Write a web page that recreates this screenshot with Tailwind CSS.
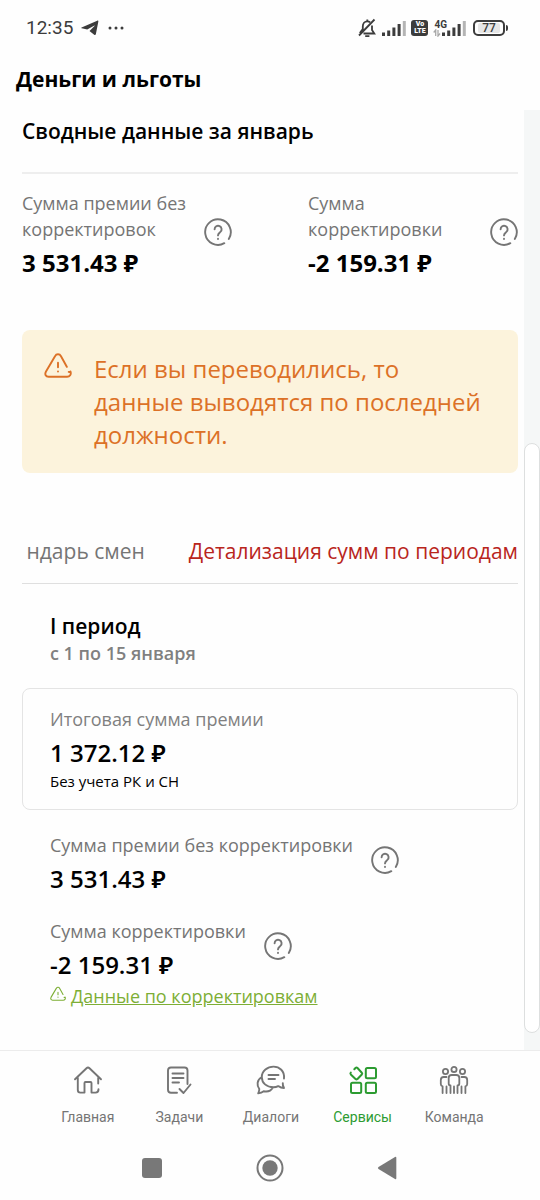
<!DOCTYPE html>
<html lang="ru">
<head>
<meta charset="utf-8">
<meta name="viewport" content="width=device-width, initial-scale=1">
<title>Деньги и льготы</title>
<script src="https://cdn.jsdelivr.net/npm/@tailwindcss/browser@4"></script>
</head>
<body class="flex min-h-screen flex-col bg-[#fefefe] font-['Open_Sans','Noto_Sans',sans-serif] text-black">
<svg class="hidden" aria-hidden="true">
  <symbol id="help" viewBox="0 0 28 28" fill="none" stroke="currentColor" stroke-width="1.900" stroke-linecap="round">
    <path d="M20.300 25.200A12.800 12.800 0 1 1 24.800 20.900"/>
    <path d="M10.600 11.200a3.500 3.500 0 1 1 5.800 2.700c-1.400 1.200-2.400 1.700-2.400 3.500"/>
    <path d="M14 20.800v.2"/>
  </symbol>
  <symbol id="warn" viewBox="0 0 28 28" fill="none" stroke="currentColor" stroke-width="1.900" stroke-linecap="round" stroke-linejoin="round">
    <path d="M22.800 14.800 17 4.200c-1.400-2.600-4.600-2.600-6 0L2 19.500c-1.600 3-.2 5.300 2.600 5.300h18.500c2.700 0 4.400-2.200 3.400-5.300q-.8.600-1.800.4"/>
    <path d="M14 10.800v4.500M14 19.400v.2"/>
  </symbol>
  <symbol id="signal" viewBox="0 0 24 16">
    <path fill="#3c3c3c" d="M0 12.500h3V16H0zM5.200 10.500h3V16h-3zM10.400 7.500h3V16h-3zM15.600 4h3v12h-3z"/>
    <path fill="#b4b4b4" d="M20.800 1h3v15h-3z"/>
  </symbol>
</svg>

<header>
  <div class="flex h-14 items-center justify-between pl-[26px] pr-8 font-[Roboto,sans-serif] text-[#3c3c3c]">
    <div class="flex items-center">
      <span class="text-[19px]">12:35</span>
      <svg class="ml-2 h-4 w-[18px]" viewBox="0 0 18 16" fill="currentColor"><path d="M.6 7.400 16.200.7c.8-.3 1.300.2 1.100 1.100L14.900 14c-.2 1-.9 1.200-1.700.7L8.500 11.100l5-5.100c.3-.4-.1-.5-.5-.3L6.200 9.600.8 8.300c-.7-.2-.7-.6-.2-.9z"/></svg>
      <svg class="ml-2 h-1 w-[18px]" viewBox="0 0 18 4" fill="currentColor"><circle cx="3" cy="2" r="1.500"/><circle cx="9" cy="2" r="1.500"/><circle cx="15" cy="2" r="1.500"/></svg>
    </div>
    <div class="flex items-center">
      <svg class="h-5 w-[18px]" viewBox="0 0 18 20" fill="none" stroke="currentColor" stroke-width="1.800"><path d="M4.800 12V8.500c0-3 1.700-5.200 4.500-5.200 1 0 2 .3 2.800.9M14 7.500V12l2.300 3.500H5.500M1 17.500 16.500 1.500M4.800 11l-3 4"/><path d="M7.200 18.200h4.200M9.300 3.300V1.500"/></svg>
      <svg class="ml-1.5 h-4 w-6"><use href="#signal"/></svg>
      <span class="ml-[5px] flex h-4 w-[17px] flex-col items-center justify-center rounded-[3px] bg-[#3c3c3c] text-[7px] font-black leading-[7px] text-white"><span>Vo</span><span>LTE</span></span>
      <div class="ml-[5px] flex flex-col">
        <span class="pl-px text-[10px] font-bold leading-[9px]">4G</span>
        <svg class="h-2 w-2" viewBox="0 0 8 8" fill="none" stroke="#a8a8a8" stroke-width="1.300"><path d="M2.700 7V1L.7 3.500M5 1v6l2-2.500"/></svg>
      </div>
      <svg class="-ml-[5px] h-4 w-6"><use href="#signal"/></svg>
      <span class="ml-[7px] flex h-4 w-8 items-center justify-center rounded-[5px] border-2 border-current"><span class="rounded-xs bg-[#e6e6e6] px-1 text-[12px] font-medium leading-[10px]">77</span></span>
      <span class="ml-px h-[6px] w-[2px] rounded-r bg-current"></span>
    </div>
  </div>
  <h1 class="px-4 pt-1.5 pb-3.5 text-[21px] font-bold leading-[34px]">Деньги и льготы</h1>
</header>

<div class="flex grow">
  <main class="min-w-0 grow pl-[22px] pr-[6px]">
    <section>
      <h2 class="border-b-2 border-[#eeeeee] pb-5 text-[21px] font-semibold leading-[42px]">Сводные данные за январь</h2>
      <div class="flex justify-between pt-4">
        <div>
          <div class="flex items-end gap-[18px]">
            <p class="text-[18px] leading-[26px] text-[#757575]">Сумма премии без<br>корректировок</p>
            <button type="button" aria-label="Справка о сумме премии" class="-mb-1 text-[#757575]"><svg class="h-7 w-7"><use href="#help"/></svg></button>
          </div>
          <p class="pt-1 text-[24px] font-bold leading-[34px]">3 531.43 ₽</p>
        </div>
        <div class="w-[210px]">
          <div class="flex items-end justify-between">
            <p class="text-[18px] leading-[26px] text-[#757575]">Сумма<br>корректировки</p>
            <button type="button" aria-label="Справка о сумме корректировки" class="-mb-1 text-[#757575]"><svg class="h-7 w-7"><use href="#help"/></svg></button>
          </div>
          <p class="pt-1 text-[24px] font-bold leading-[34px]">-2 159.31 ₽</p>
        </div>
      </div>
    </section>

    <div role="note" class="mt-[50px] flex gap-[22px] rounded-lg bg-[#fcf3dc] py-[22px] pl-[22px] pr-[30px] text-[#dc7127]">
      <svg class="h-7 w-7 shrink-0"><use href="#warn"/></svg>
      <p class="text-[24px] leading-[33px]">Если вы переводились, то данные выводятся по последней должности.</p>
    </div>

    <div role="tablist" class="mt-[62px] flex justify-end overflow-hidden whitespace-nowrap border-b border-[#dfdfdf] pb-4 text-[21px] leading-[32px]">
      <button type="button" role="tab" aria-selected="false" class="mr-11 text-[#757575]">ндарь смен</button>
      <button type="button" role="tab" aria-selected="true" class="text-[#b9251c]">Детализация сумм по периодам</button>
    </div>

    <section>
      <div class="px-7 pt-7">
        <h3 class="text-[21px] font-semibold leading-[28px]">I период</h3>
        <p class="text-[18px] font-semibold leading-[26px] text-[#808080]">с 1 по 15 января</p>
      </div>
      <div class="mt-[22px] rounded-lg border border-[#e4e4e4] px-[27px] py-[17px]">
        <p class="text-[18px] leading-[26px] text-[#808080]">Итоговая сумма премии</p>
        <p class="pt-1 text-[24px] font-semibold leading-[34px]">1 372.12 ₽</p>
        <p class="text-[15px] leading-[22px]">Без учета РК и СН</p>
      </div>
      <div class="flex gap-[18px] px-7 pt-[22px]">
        <div>
          <p class="text-[18px] leading-[26px] text-[#757575]">Сумма премии без корректировки</p>
          <p class="pt-1 text-[24px] font-semibold leading-[34px]">3 531.43 ₽</p>
        </div>
        <button type="button" aria-label="Справка о премии за период" class="mt-[14px] h-7 text-[#757575]"><svg class="h-7 w-7"><use href="#help"/></svg></button>
      </div>
      <div class="flex gap-[18px] px-7 pt-[22px]">
        <div>
          <p class="text-[18px] leading-[26px] text-[#757575]">Сумма корректировки</p>
          <p class="pt-1 text-[24px] font-semibold leading-[34px]">-2 159.31 ₽</p>
        </div>
        <button type="button" aria-label="Справка о корректировке за период" class="mt-[14px] h-7 text-[#757575]"><svg class="h-7 w-7"><use href="#help"/></svg></button>
      </div>
      <a href="#" class="flex items-start gap-[5px] px-7 text-[18px] leading-[28px] text-[#7dae35]">
        <svg class="mt-1 h-4 w-4"><use href="#warn"/></svg><span class="underline">Данные по корректировкам</span>
      </a>
    </section>
  </main>

  <div class="flex w-4 shrink-0 flex-col bg-[#f5f7f7]">
    <div class="grow-[334]"></div>
    <div class="grow-[589] rounded-full border border-[#dddfdf] bg-white"></div>
    <div class="grow-[17]"></div>
  </div>
</div>

<footer class="shrink-0 border-t border-[#ececec] font-[Roboto,sans-serif] text-[#757575]">
  <nav class="flex h-[84px] pl-[42px] pr-10 text-[14px]">
    <a href="#" class="flex flex-1 flex-col items-center pt-[14px]">
      <svg class="h-[30px] w-[30px]" viewBox="0 0 30 30" fill="none" stroke="currentColor" stroke-width="1.900" stroke-linecap="round" stroke-linejoin="round"><path d="M2 14.300 13.500 3.200q1.500-1.400 3 0L28 14.300M4.800 12.500V25q0 2.600 2.600 2.600h4.100V18q0-1 1-1h5q1 0 1 1v9.600h4q3 0 3-3.400M25.200 18.500v-6"/></svg>
      <span class="mt-3 leading-5">Главная</span>
    </a>
    <a href="#" class="flex flex-1 flex-col items-center pt-[14px]">
      <svg class="h-[30px] w-[30px]" viewBox="0 0 30 30" fill="none" stroke="currentColor" stroke-width="1.900" stroke-linecap="round" stroke-linejoin="round"><path d="M13 27.800H7q-3 0-3-3V5.500q0-3 3-3h13.500q3 0 3 3V19M8.500 8.500h11M8.500 13h11M8.500 17.500H15M15.500 24l4 4 7-8.500"/></svg>
      <span class="mt-3 leading-5">Задачи</span>
    </a>
    <a href="#" class="flex flex-1 flex-col items-center pt-[14px]">
      <svg class="h-[30px] w-[30px]" viewBox="0 0 30 30" fill="none" stroke="currentColor" stroke-width="1.900" stroke-linecap="round" stroke-linejoin="round"><path d="M28 13.500C28.800 6 23.500 1.600 17.500 1.600S5.800 6 5.800 12s4.700 10.300 11.700 10.300c2 0 3.400-.5 4.700-1.200 1.800 1.300 3.600 2 5.800 2-1-1.700-1.400-3.100-1.200-5M12.500 10h10M12.500 14h6.500M5.500 12.300C.8 15 .6 20.500 3.300 24c0 1.500-.4 2.900-1.100 4.300 2.300-.2 4-.8 5.500-2 4 .8 7.500-.8 9-3.500"/></svg>
      <span class="mt-3 leading-5">Диалоги</span>
    </a>
    <a href="#" aria-current="page" class="flex flex-1 flex-col items-center pt-[14px] text-[#2c9b31]">
      <svg class="h-[30px] w-[30px]" viewBox="0 0 30 30" fill="none" stroke="currentColor" stroke-width="2" stroke-linecap="round" stroke-linejoin="round"><path d="M6.300 4.300 7.500 3q1-.9 2 0l4.300 4.700q.8.900 0 1.800L9.500 14q-1 .8-2 0L2.800 9.500q-.8-1 0-2"/><rect x="17.800" y="3" width="10.200" height="10.200" rx="1.500"/><rect x="3" y="17.800" width="10.200" height="10.200" rx="1.500"/><rect x="17.800" y="17.800" width="10.200" height="10.200" rx="1.500"/></svg>
      <span class="mt-3 leading-5">Сервисы</span>
    </a>
    <a href="#" class="flex flex-1 flex-col items-center pt-[14px]">
      <svg class="h-[30px] w-[30px]" viewBox="0 0 30 30" fill="none" stroke="currentColor" stroke-width="1.800" stroke-linecap="round" stroke-linejoin="round"><circle cx="6.500" cy="6.500" r="2.600"/><circle cx="15" cy="4.400" r="2.600"/><circle cx="23.500" cy="6.500" r="2.600"/><path d="M11.500 28v-7.500q-1.800 0-1.800-2V13q0-3 3-3h4.600q3 0 3 3v5.500q0 2-1.800 2V28M15 21.500V28M7.500 12H4.700q-2.900 0-2.900 3v4q0 2 1.800 2.400V28M7.500 21.500V28M22.500 12h2.800q2.900 0 2.900 3v4q0 2-1.800 2.400V28M22.500 21.500V28"/></svg>
      <span class="mt-3 leading-5">Команда</span>
    </a>
  </nav>
  <div class="flex h-[65px] items-center justify-between pl-[142px] pr-[143px] text-[#787878]">
    <button type="button" aria-label="Недавние приложения"><svg class="h-5 w-5" viewBox="0 0 20 20" fill="currentColor"><rect width="20" height="20" rx="3"/></svg></button>
    <button type="button" aria-label="Домой"><svg class="h-7 w-7" viewBox="0 0 28 28"><circle cx="14" cy="14" r="12.500" fill="none" stroke="currentColor" stroke-width="2"/><circle cx="14" cy="14" r="7.700" fill="currentColor"/></svg></button>
    <button type="button" aria-label="Назад"><svg class="h-6 w-5" viewBox="0 0 20 24" fill="currentColor"><path d="M18 .9q1.300-.6 1.300.8v20.600q0 1.400-1.300.8L1.500 13q-1.300-1 0-2z"/></svg></button>
  </div>
</footer>
</body>
</html>
